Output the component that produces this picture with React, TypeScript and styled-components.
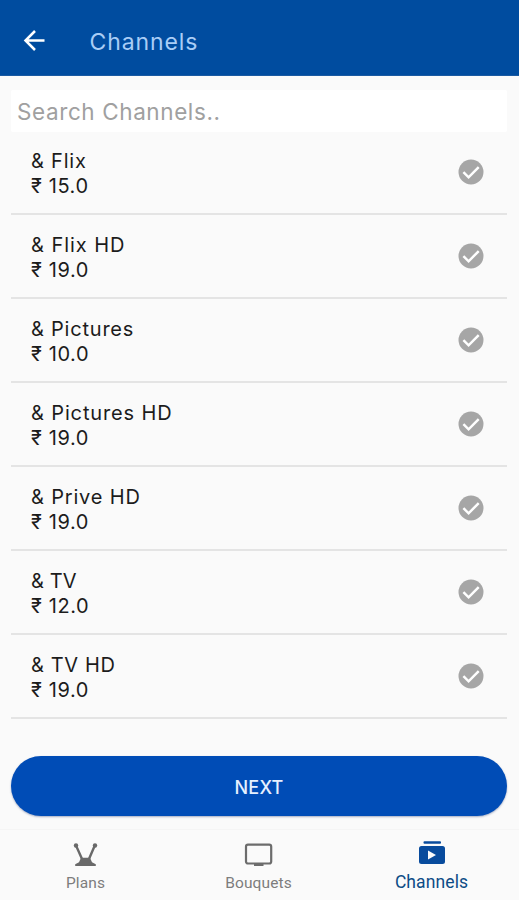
import React from "react";
import styled, { createGlobalStyle } from "styled-components";

const GlobalStyle = createGlobalStyle`
  * { box-sizing: border-box; }
  body { margin: 0; background: #fafafa; }
  button, input { font: inherit; border: 0; padding: 0; background: none; }
`;

const Screen = styled.div`
  width: 519px;
  height: 900px;
  display: flex;
  flex-direction: column;
  overflow: hidden;
  background: #fafafa;
  font-family: Inter, "Liberation Sans", sans-serif;
`;

const Header = styled.header`
  height: 76px;
  flex: none;
  display: flex;
  align-items: center;
  padding: 5px 0 0 20px;
  background: #004c9f;
  border-bottom: 1px solid #1a5aa2;
`;

const BackButton = styled.button`
  display: flex;
  width: 28px;
  height: 28px;
  color: #fff;
`;

const Title = styled.h1`
  margin: 3px 0 0 41.500px;
  font-size: 23px;
  font-weight: 400;
  line-height: 28px;
  letter-spacing: 0.9px;
  color: #a9cdf6;
`;

const Content = styled.main`
  flex: 1;
  display: flex;
  flex-direction: column;
  padding: 14px 12px 0 11px;
`;

const Search = styled.input`
  height: 42px;
  width: 100%;
  flex: none;
  padding: 0 6px;
  background: #fff;
  font-size: 22.5px;
  letter-spacing: 0.6px;
  outline: none;
  border-radius: 2px;
  &::placeholder { color: #a0a0a0; opacity: 1; }
`;

const List = styled.ul`
  list-style: none;
  margin: -1px 0 0;
  padding: 0;
`;

const Row = styled.li`
  height: 84px;
  display: flex;
  align-items: center;
  justify-content: space-between;
  padding: 0 23px 0 20px;
  border-bottom: 2px solid #e4e4e4;
`;

const Info = styled.div`
  display: flex;
  flex-direction: column;
  padding-top: 3px;
  color: #1c1c1c;
  font-size: 20px;
  line-height: 25px;
`;

const Name = styled.span<{ $track: number }>`
  letter-spacing: ${(p) => p.$track}px;
  white-space: nowrap;
`;

const Price = styled.span`
  letter-spacing: 0.6px;
`;

const Next = styled.button`
  height: 60px;
  flex: none;
  margin-top: 37px;
  padding-top: 2px;
  border-radius: 30px;
  background: #004cb6;
  color: #e6f0ff;
  font-size: 18px;
  font-weight: 500;
  letter-spacing: 0.2px;
  box-shadow: 0 1px 2px rgba(60, 80, 130, 0.45);
`;

const Nav = styled.nav`
  height: 71px;
  flex: none;
  display: grid;
  grid-template-columns: repeat(3, 1fr);
  border-top: 1px solid #f5f5f5;
`;

const Tab = styled.a<{ $active?: boolean }>`
  display: flex;
  flex-direction: column;
  align-items: center;
  padding-top: 10px;
  padding-right: 2px;
  font-family: Roboto, sans-serif;
  font-size: ${(p) => (p.$active ? 17.5 : 15.5)}px;
  line-height: ${(p) => (p.$active ? 24 : 26)}px;
  letter-spacing: 0.1px;
  color: ${(p) => (p.$active ? "#0d4c86" : "#7d7d7d")};
`;

const TabIcon = styled.svg`
  width: 30px;
  height: 30px;
  flex: none;
  overflow: visible;
`;

const channels = [
  { name: "& Flix", price: "15.0", track: 0.8 },
  { name: "& Flix HD", price: "19.0", track: 0.95 },
  { name: "& Pictures", price: "10.0", track: 0.78 },
  { name: "& Pictures HD", price: "19.0", track: 0.87 },
  { name: "& Prive HD", price: "19.0", track: 0.83 },
  { name: "& TV", price: "12.0", track: 0.1 },
  { name: "& TV HD", price: "19.0", track: 0.65 },
];

const Check = () => (
  <svg width="26" height="26" viewBox="0 0 26 26">
    <circle cx="13" cy="13" r="12.5" fill="#a6a6a6" />
    <path d="M5.4 13.2 10.6 18.3 20.7 8.1" fill="none" stroke="#fff" strokeWidth="2.5" />
  </svg>
);

export default function App() {
  return (
    <>
      <GlobalStyle />
      <Screen>
        <Header>
          <BackButton aria-label="Back">
            <svg width="28" height="28" viewBox="0 0 28 28" fill="none" stroke="currentColor" strokeWidth="2.5">
              <path d="M24.5 14.5H5.5M15 5 5.5 14.5l9.5 9.5" />
            </svg>
          </BackButton>
          <Title>Channels</Title>
        </Header>
        <Content>
          <Search placeholder="Search Channels.." />
          <List>
            {channels.map((c) => (
              <Row key={c.name}>
                <Info>
                  <Name $track={c.track}>{c.name}</Name>
                  <Price>₹ {c.price}</Price>
                </Info>
                <Check />
              </Row>
            ))}
          </List>
          <Next>NEXT</Next>
        </Content>
        <Nav>
          <Tab>
            <TabIcon viewBox="0 0 30 30" fill="#696969">
              <path d="M5 5.5 10.8 18.5M23.8 5.5 18.2 18.5" stroke="#696969" strokeWidth="2.4" />
              <circle cx="5" cy="5.5" r="2.2" />
              <circle cx="24" cy="5.5" r="2.2" />
              <path d="M4.2 26v-1.800l3.800-2 2-4.400h9l2 4.400 3.800 2V26z" />
            </TabIcon>
            Plans
          </Tab>
          <Tab>
            <TabIcon viewBox="0 0 30 30" fill="#6c6c6c">
              <rect x="2" y="4.7" width="25.2" height="18.8" rx="2" fill="none" stroke="#6c6c6c" strokeWidth="2.2" />
              <rect x="10" y="23" width="9.5" height="3" />
            </TabIcon>
            Bouquets
          </Tab>
          <Tab $active>
            <TabIcon viewBox="0 0 30 30" fill="#084b9d">
              <rect x="6.5" y="1.2" width="17.5" height="2.6" rx="1" />
              <path fillRule="evenodd" d="M4.500 6h21a2.500 2.500 0 0 1 2.500 2.500v13a2.500 2.500 0 0 1-2.500 2.500h-21A2.500 2.500 0 0 1 2 21.500v-13A2.500 2.500 0 0 1 4.500 6zM11 10.500v9l8-4.500z" />
            </TabIcon>
            Channels
          </Tab>
        </Nav>
      </Screen>
    </>
  );
}
